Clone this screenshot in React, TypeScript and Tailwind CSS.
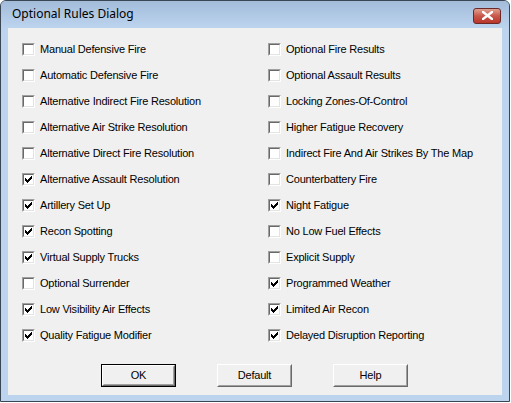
const left = [
  ["Manual Defensive Fire", false],
  ["Automatic Defensive Fire", false],
  ["Alternative Indirect Fire Resolution", false],
  ["Alternative Air Strike Resolution", false],
  ["Alternative Direct Fire Resolution", false],
  ["Alternative Assault Resolution", true],
  ["Artillery Set Up", true],
  ["Recon Spotting", true],
  ["Virtual Supply Trucks", true],
  ["Optional Surrender", false],
  ["Low Visibility Air Effects", true],
  ["Quality Fatigue Modifier", true],
] as const;

const right = [
  ["Optional Fire Results", false],
  ["Optional Assault Results", false],
  ["Locking Zones-Of-Control", false],
  ["Higher Fatigue Recovery", false],
  ["Indirect Fire And Air Strikes By The Map", false],
  ["Counterbattery Fire", false],
  ["Night Fatigue", true],
  ["No Low Fuel Effects", false],
  ["Explicit Supply", false],
  ["Programmed Weather", true],
  ["Limited Air Recon", true],
  ["Delayed Disruption Reporting", true],
] as const;

function Check({ label, checked }: { label: string; checked: boolean }) {
  return (
    <div className="flex items-center h-[26px] gap-[5px]">
      {/* sunken classic checkbox */}
      <div className="w-[13px] h-[13px] border border-t-[#a0a0a0] border-l-[#a0a0a0] border-b-white border-r-white">
        <div className="w-full h-full bg-white border border-t-[#696969] border-l-[#696969] border-b-[#e3e3e3] border-r-[#e3e3e3] flex items-center justify-center">
          {checked && (
            <svg width="7" height="7" viewBox="0 0 7 7">
              <path d="M0 2h1v1h1v1h1V3h1V2h1V1h1V0h1v3H6v1H5v1H4v1H3v1H2V6H1V5H0z" fill="#000" />
            </svg>
          )}
        </div>
      </div>
      <span className="text-[11px] tracking-[-0.2px] text-black leading-none whitespace-nowrap">
        {label}
      </span>
    </div>
  );
}

function Button({ label, isDefault }: { label: string; isDefault?: boolean }) {
  return (
    <div className={`w-[75px] h-[23px] ${isDefault ? "border border-black" : ""}`}>
      <div className="w-full h-full border border-t-white border-l-white border-b-[#696969] border-r-[#696969]">
        <div className="w-full h-full border border-t-[#f0f0f0] border-l-[#f0f0f0] border-b-[#a0a0a0] border-r-[#a0a0a0] bg-[#f0f0f0] flex items-center justify-center text-[11px] tracking-[-0.2px] text-black">
          {label}
        </div>
      </div>
    </div>
  );
}

export default function App() {
  return (
    <div
      className="w-[511px] h-[403px] bg-white"
      style={{ fontFamily: '"Liberation Sans", Arial, sans-serif' }}
    >
      <div className="w-[510px] h-[402px] rounded-t-[6px] border border-[#3b4654] bg-[#bcd4ee] flex flex-col">
        {/* title bar */}
        <div className="h-[27px] shrink-0 rounded-t-[5px] bg-gradient-to-b from-[#a3bcda] to-[#bcd4ee] flex items-center justify-between pl-[11px] pr-[8px]">
          <span
            className="text-[12px] text-black pb-[2px]"
            style={{ fontFamily: '"Noto Sans", "Open Sans", sans-serif' }}
          >
            Optional Rules Dialog
          </span>
          <div className="w-[28px] h-[16px] mt-[2px] rounded-[3px] border border-[#6b2a2a] bg-gradient-to-b from-[#e0a092] via-[#c8574a] to-[#b9352a] flex items-center justify-center">
            <svg width="11" height="9" viewBox="0 0 11 9">
              <path d="M1 1l9 7M10 1L1 8" stroke="#fff" strokeWidth="2.4" strokeLinecap="square" />
            </svg>
          </div>
        </div>
        {/* client */}
        <div className="mx-[7px] mb-[6px] flex-1 bg-[#f0f0f0] flex flex-col pt-[8px] pl-[14px]">
          <div className="flex">
            <div className="w-[246px] flex flex-col">
              {left.map(([l, c]) => (
                <Check key={l} label={l} checked={c} />
              ))}
            </div>
            <div className="flex flex-col">
              {right.map(([l, c]) => (
                <Check key={l} label={l} checked={c} />
              ))}
            </div>
          </div>
          <div className="flex gap-[41px] mt-[16px] pl-[79px]">
            <Button label="OK" isDefault />
            <Button label="Default" />
            <Button label="Help" />
          </div>
        </div>
      </div>
    </div>
  );
}
